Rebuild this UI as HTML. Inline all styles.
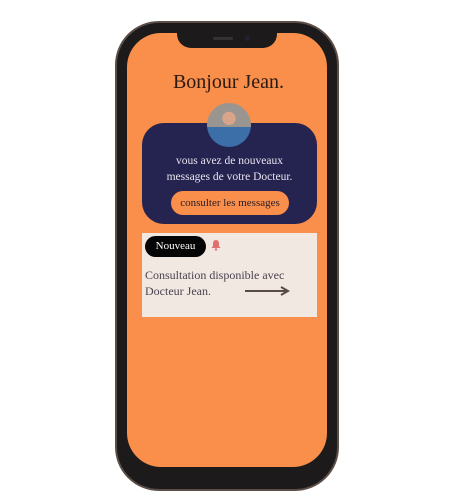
<!DOCTYPE html>
<html><head><style>
body{margin:0;width:474px;height:474px;background:#fff;position:relative;overflow:hidden;font-family:"Liberation Serif",serif}
.phone{position:absolute;left:115px;top:21px;width:224px;height:470px;background:#1c1a1a;border-radius:44px;border:2px solid #5a4e46;box-sizing:border-box}
.screen{position:absolute;left:127px;top:33px;width:200px;height:434px;background:#f98f4a;border-radius:34px;overflow:hidden}
.notch{position:absolute;left:177px;top:32px;width:100px;height:16px;background:#1c1a1a;border-radius:0 0 14px 14px}
.abs{position:absolute}
</style></head><body>
<div class="phone"></div>
<div class="screen"></div>
<div class="notch"><div class="abs" style="left:36px;top:5px;width:20px;height:3px;background:#333;border-radius:2px"></div><div class="abs" style="left:68px;top:4px;width:5px;height:5px;background:#223;border-radius:50%"></div></div>
<div class="abs" style="left:0;width:457px;top:71px;text-align:center;font-size:20px;color:#2a1a12">Bonjour Jean.</div>
<div class="abs" style="left:142px;top:123px;width:175px;height:101px;background:#252350;border-radius:22px"></div>
<div class="abs" style="left:207px;top:103px;width:44px;height:44px;border-radius:50%;background:radial-gradient(circle at 50% 35%,#d9a58a 0 18%,transparent 19%),linear-gradient(#9a9590 0 55%,#3c6fa8 55%);overflow:hidden"></div>
<div class="abs" style="left:142px;width:175px;top:153px;text-align:center;font-size:11.5px;line-height:16px;color:#e8e4ee">vous avez de nouveaux<br>messages de votre Docteur.</div>
<div class="abs" style="left:171px;top:191px;width:118px;height:24px;background:#f98f4a;border-radius:12px;text-align:center;line-height:24px;font-size:11px;color:#2a1a22">consulter les messages</div>
<div class="abs" style="left:142px;top:233px;width:175px;height:84px;background:#f1e8e2"></div>
<div class="abs" style="left:145px;top:236px;width:61px;height:21px;background:#050505;border-radius:11px;color:#fff;font-size:11px;text-align:center;line-height:21px">Nouveau</div>
<svg class="abs" style="left:210px;top:239px" width="12" height="12" viewBox="0 0 12 12"><path d="M6 1C3.5 1 3 3 3 5v2L1.5 9h9L9 7V5C9 3 8.5 1 6 1z" fill="#e07070"/><circle cx="6" cy="10.5" r="1.2" fill="#e07070"/></svg>
<div class="abs" style="left:145px;top:267px;font-size:12px;line-height:16px;color:#4a4250">Consultation disponible avec<br>Docteur Jean.</div>
<svg class="abs" style="left:244px;top:286px" width="46" height="10"><line x1="1" y1="5" x2="42" y2="5" stroke="#5a4a46" stroke-width="2"/><path d="M37 1L44 5L37 9" fill="none" stroke="#5a4a46" stroke-width="2"/></svg>
</body></html>
